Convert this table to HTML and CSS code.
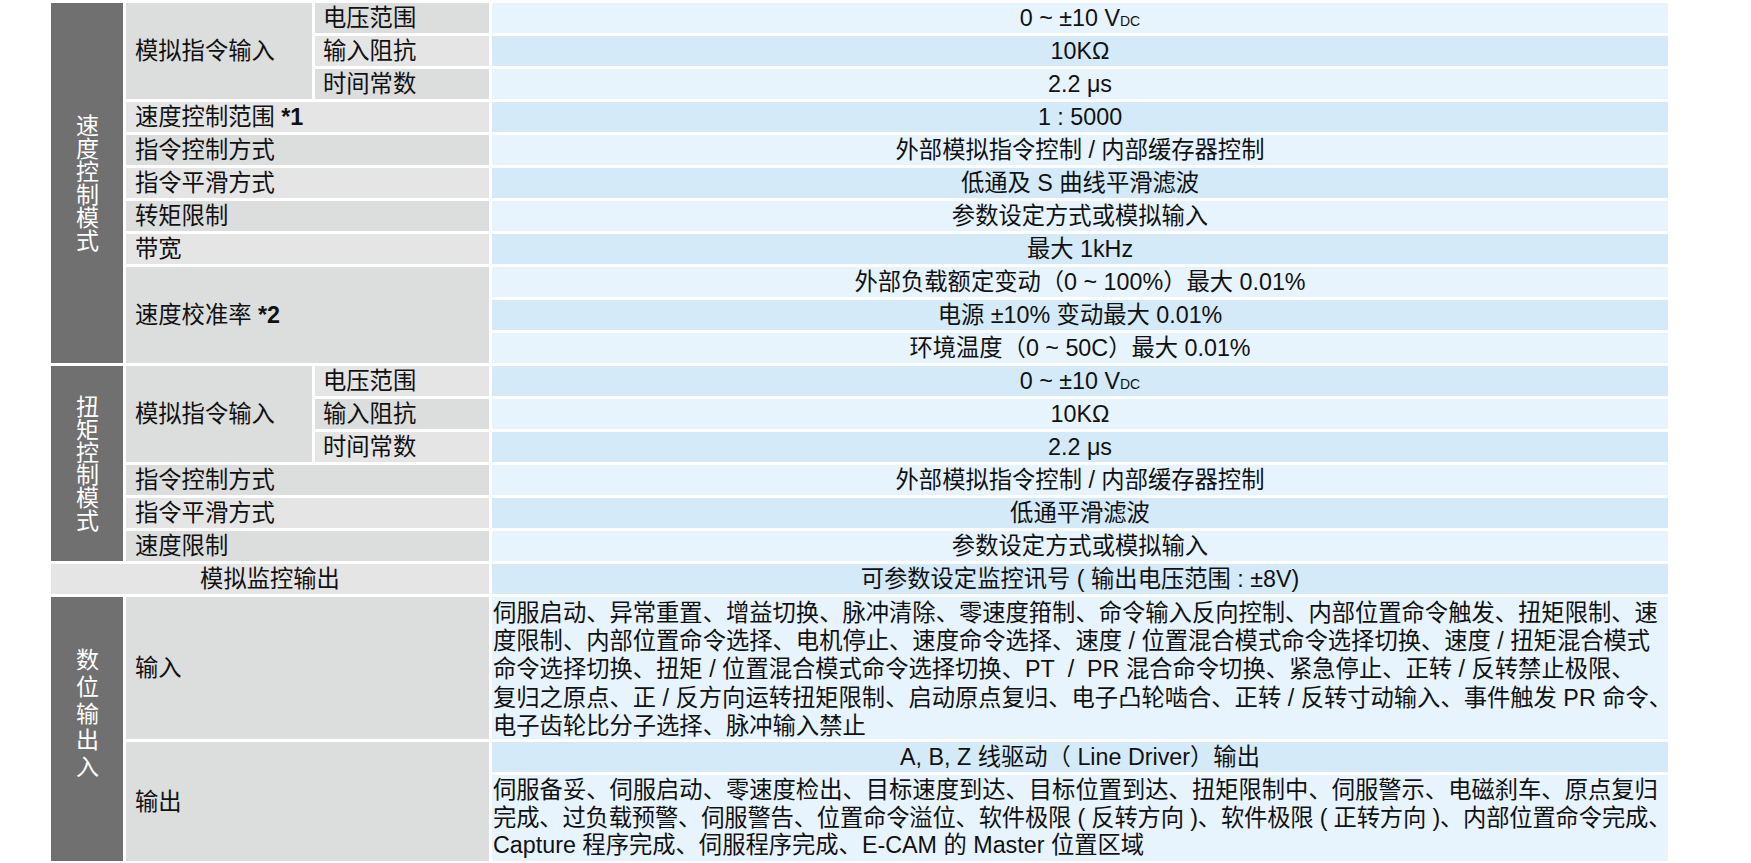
FILE: index.html
```html
<!DOCTYPE html>
<html lang="zh-CN">
<head>
<meta charset="utf-8">
<title>规格表</title>
<link rel="stylesheet" href="styles.css">
</head>
<body>
<div class="spec">
  <div class="sec sec-speed">速度控制模式</div>
  <div class="lbl r3"><span>模拟指令输入</span></div>
  <div class="sub-lbl"><span>电压范围</span></div>
  <div class="val">0 ~ ±10 V<span class="dc">DC</span></div>
  <div class="sub-lbl alt"><span>输入阻抗</span></div>
  <div class="val alt">10KΩ</div>
  <div class="sub-lbl"><span>时间常数</span></div>
  <div class="val">2.2 μs</div>
  <div class="lbl c2 alt"><span>速度控制范围 <b>*1</b></span></div>
  <div class="val alt">1 : 5000</div>
  <div class="lbl c2"><span>指令控制方式</span></div>
  <div class="val">外部模拟指令控制 / 内部缓存器控制</div>
  <div class="lbl c2 alt"><span>指令平滑方式</span></div>
  <div class="val alt">低通及 S 曲线平滑滤波</div>
  <div class="lbl c2"><span>转矩限制</span></div>
  <div class="val">参数设定方式或模拟输入</div>
  <div class="lbl c2 alt"><span>带宽</span></div>
  <div class="val alt">最大 1kHz</div>
  <div class="lbl c2 r3"><span>速度校准率 <b>*2</b></span></div>
  <div class="val">外部负载额定变动（0 ~ 100%）最大 0.01%</div>
  <div class="val alt">电源 ±10% 变动最大 0.01%</div>
  <div class="val">环境温度（0 ~ 50C）最大 0.01%</div>

  <div class="sec sec-torque">扭矩控制模式</div>
  <div class="lbl r3"><span>模拟指令输入</span></div>
  <div class="sub-lbl alt"><span>电压范围</span></div>
  <div class="val alt">0 ~ ±10 V<span class="dc">DC</span></div>
  <div class="sub-lbl"><span>输入阻抗</span></div>
  <div class="val">10KΩ</div>
  <div class="sub-lbl alt"><span>时间常数</span></div>
  <div class="val alt">2.2 μs</div>
  <div class="lbl c2"><span>指令控制方式</span></div>
  <div class="val">外部模拟指令控制 / 内部缓存器控制</div>
  <div class="lbl c2 alt"><span>指令平滑方式</span></div>
  <div class="val alt">低通平滑滤波</div>
  <div class="lbl c2"><span>速度限制</span></div>
  <div class="val">参数设定方式或模拟输入</div>

  <div class="lbl c3 center alt"><span>模拟监控输出</span></div>
  <div class="val alt">可参数设定监控讯号 ( 输出电压范围 : ±8V)</div>

  <div class="sec sec-io">数位输出入</div>
  <div class="lbl c2"><span>输入</span></div>
  <div class="val text">
    <span class="ln">伺服启动、异常重置、增益切换、脉冲清除、零速度箝制、命令输入反向控制、内部位置命令触发、扭矩限制、速</span>
    <span class="ln">度限制、内部位置命令选择、电机停止、速度命令选择、速度 / 位置混合模式命令选择切换、速度 / 扭矩混合模式</span>
    <span class="ln">命令选择切换、扭矩 / 位置混合模式命令选择切换、PT&nbsp; /&nbsp; PR 混合命令切换、紧急停止、正转 / 反转禁止极限、</span>
    <span class="ln">复归之原点、正 / 反方向运转扭矩限制、启动原点复归、电子凸轮啮合、正转 / 反转寸动输入、事件触发 PR 命令、</span>
    <span class="ln">电子齿轮比分子选择、脉冲输入禁止</span>
  </div>
  <div class="lbl c2 r2"><span>输出</span></div>
  <div class="val alt">A, B, Z 线驱动（ Line Driver）输出</div>
  <div class="val text out">
    <span class="ln">伺服备妥、伺服启动、零速度检出、目标速度到达、目标位置到达、扭矩限制中、伺服警示、电磁刹车、原点复归</span>
    <span class="ln tight">完成、过负载预警、伺服警告、位置命令溢位、软件极限 ( 反转方向 )、软件极限 ( 正转方向 )、内部位置命令完成、</span>
    <span class="ln">Capture 程序完成、伺服程序完成、E-CAM 的 Master 位置区域</span>
  </div>
</div>
</body>
</html>
```

FILE: styles.css
```css
html, body {
  margin: 0;
  padding: 0;
  background: #ffffff;
}

body {
  font-family: "Liberation Sans", "Noto Sans CJK SC", sans-serif;
  font-size: 23.3px;
  color: #111111;
}

.spec {
  display: grid;
  grid-template-columns: 72px 186px 174px 1176px;
  grid-template-rows: repeat(18, 30px) 142px 30px 86px;
  gap: 3px;
  margin: 3px 0 0 51px;
  width: 1617px;
}

.spec > div {
  line-height: 30px;
  white-space: nowrap;
}

.sec {
  background: #707070;
  color: #ffffff;
  display: flex;
  align-items: center;
  justify-content: center;
  writing-mode: vertical-rl;
  text-orientation: upright;
  font-family: "Noto Sans CJK SC", sans-serif;
  font-size: 23px;
}

.spec > .sec {
  line-height: 23px;
}

.sec-speed { grid-row: span 11; }
.sec-torque { grid-row: span 6; letter-spacing: -0.3px; }
.sec-io {
  grid-row: span 3;
  letter-spacing: 3.7px;
  padding-bottom: 28px;
}

.lbl, .sub-lbl {
  background: #dcdddd;
  padding-left: 9px;
  display: flex;
  align-items: center;
}

.sub-lbl { padding-left: 8px; }

.lbl.alt, .sub-lbl.alt { background: #e5e5e5; }

.lbl b { font-family: "Liberation Sans", sans-serif; }

.lbl.center { justify-content: center; padding-left: 0; }

.r2 { grid-row: span 2; }
.r3 { grid-row: span 3; }
.c2 { grid-column: span 2; }
.c3 { grid-column: span 3; }

.val {
  background: #e7f4fd;
  text-align: center;
}

.val.alt { background: #d4eaf8; }

.dc {
  font-size: 14px;
}

.spec > .val.text {
  text-align: left;
  line-height: 28.2px;
  padding: 2px 0 0 1px;
}

.spec > .val.out {
  line-height: 27.6px;
  padding-top: 2px;
}

.ln {
  display: block;
  white-space: nowrap;
}

.ln.tight {
  letter-spacing: -0.17px;
}
```
